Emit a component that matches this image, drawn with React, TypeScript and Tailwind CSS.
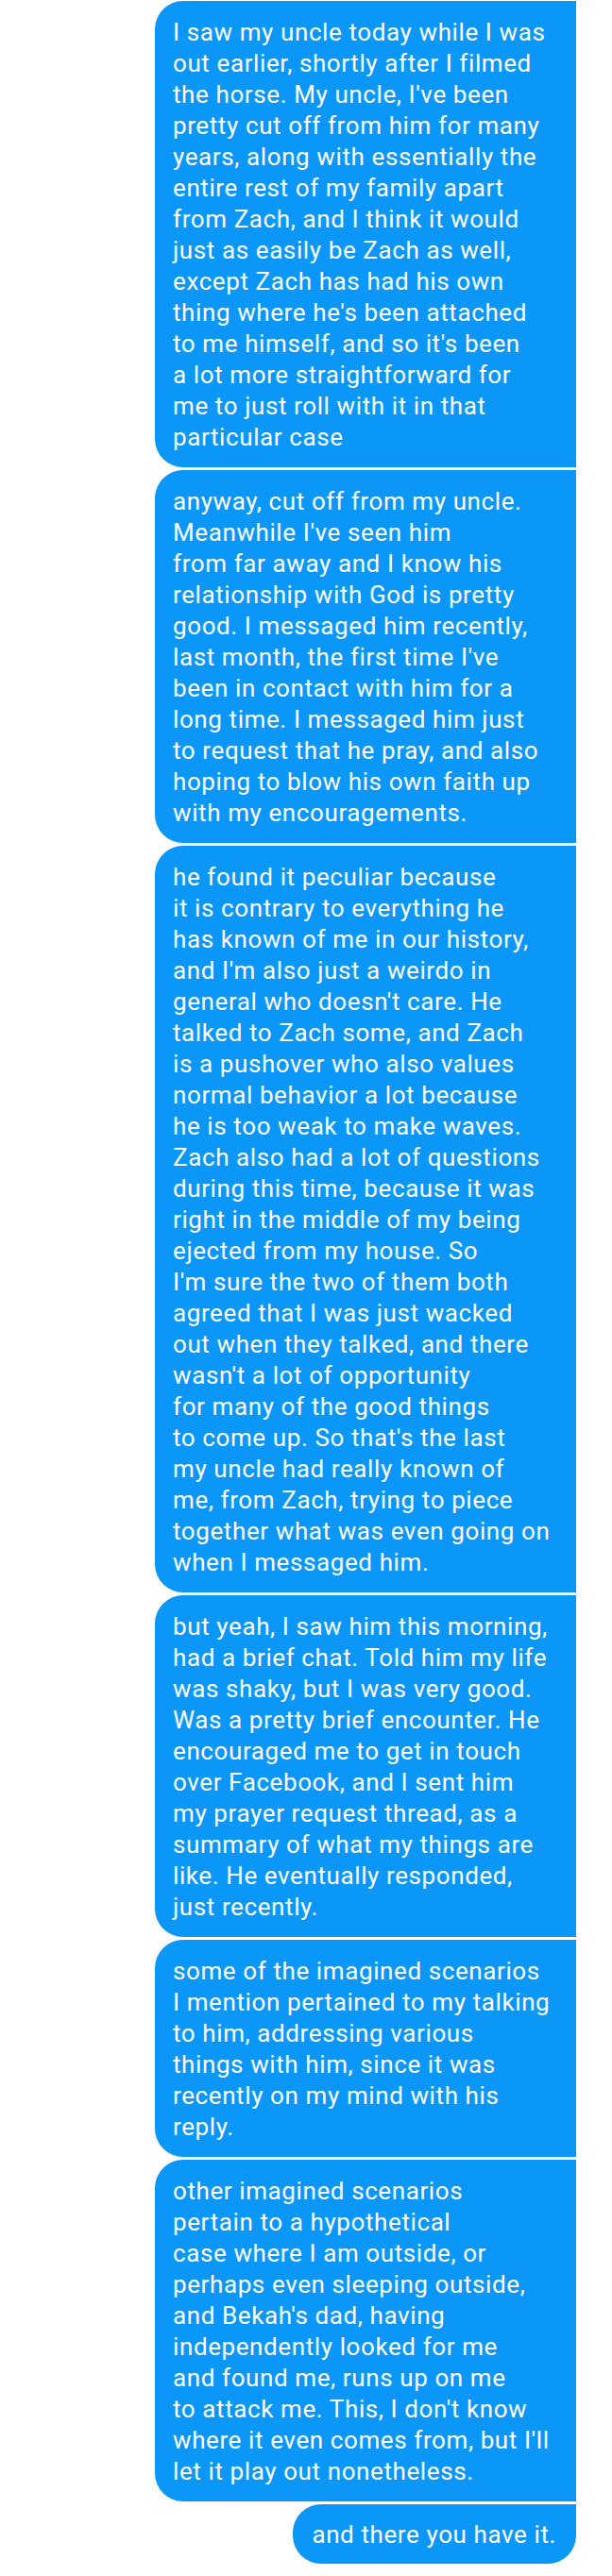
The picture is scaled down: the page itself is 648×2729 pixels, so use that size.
const messages: string[][] = [
  [
    'I saw my uncle today while I was',
    'out earlier, shortly after I filmed',
    "the horse. My uncle, I've been",
    'pretty cut off from him for many',
    'years, along with essentially the',
    'entire rest of my family apart',
    'from Zach, and I think it would',
    'just as easily be Zach as well,',
    'except Zach has had his own',
    "thing where he's been attached",
    "to me himself, and so it's been",
    'a lot more straightforward for',
    'me to just roll with it in that',
    'particular case',
  ],
  [
    'anyway, cut off from my uncle.',
    "Meanwhile I've seen him",
    'from far away and I know his',
    'relationship with God is pretty',
    'good. I messaged him recently,',
    "last month, the first time I've",
    'been in contact with him for a',
    'long time. I messaged him just',
    'to request that he pray, and also',
    'hoping to blow his own faith up',
    'with my encouragements.',
  ],
  [
    'he found it peculiar because',
    'it is contrary to everything he',
    'has known of me in our history,',
    "and I'm also just a weirdo in",
    "general who doesn't care. He",
    'talked to Zach some, and Zach',
    'is a pushover who also values',
    'normal behavior a lot because',
    'he is too weak to make waves.',
    'Zach also had a lot of questions',
    'during this time, because it was',
    'right in the middle of my being',
    'ejected from my house. So',
    "I'm sure the two of them both",
    'agreed that I was just wacked',
    'out when they talked, and there',
    "wasn't a lot of opportunity",
    'for many of the good things',
    "to come up. So that's the last",
    'my uncle had really known of',
    'me, from Zach, trying to piece',
    'together what was even going on',
    'when I messaged him.',
  ],
  [
    'but yeah, I saw him this morning,',
    'had a brief chat. Told him my life',
    'was shaky, but I was very good.',
    'Was a pretty brief encounter. He',
    'encouraged me to get in touch',
    'over Facebook, and I sent him',
    'my prayer request thread, as a',
    'summary of what my things are',
    'like. He eventually responded,',
    'just recently.',
  ],
  [
    'some of the imagined scenarios',
    'I mention pertained to my talking',
    'to him, addressing various',
    'things with him, since it was',
    'recently on my mind with his',
    'reply.',
  ],
  [
    'other imagined scenarios',
    'pertain to a hypothetical',
    'case where I am outside, or',
    'perhaps even sleeping outside,',
    "and Bekah's dad, having",
    'independently looked for me',
    'and found me, runs up on me',
    "to attack me. This, I don't know",
    "where it even comes from, but I'll",
    'let it play out nonetheless.',
  ],
];

function Bubble({ lines }: { lines: string[] }) {
  return (
    <div className="w-[446px] bg-[#0a97f7] rounded-l-[30px] pl-[19px] pr-[20px] pt-[17px] pb-[15px]">
      {lines.map((line, i) => (
        <span key={i} className="block whitespace-nowrap">
          {line}
        </span>
      ))}
    </div>
  );
}

export default function App() {
  return (
    <div className="min-h-[2729px] bg-white">
      <div
        className="flex flex-col items-end gap-[3px] pt-px pr-[38px] text-white text-[26px] leading-[33px] tracking-[0.6px]"
        style={{ fontFamily: 'Roboto, "Liberation Sans", sans-serif' }}
      >
        {messages.map((lines, i) => (
          <Bubble key={i} lines={lines} />
        ))}
        <div className="bg-[#0a97f7] rounded-l-[30px] rounded-br-[30px] pl-[20px] pr-[21px] pt-[16px] pb-[14px] whitespace-nowrap">
          and there you have it.
        </div>
      </div>
    </div>
  );
}
